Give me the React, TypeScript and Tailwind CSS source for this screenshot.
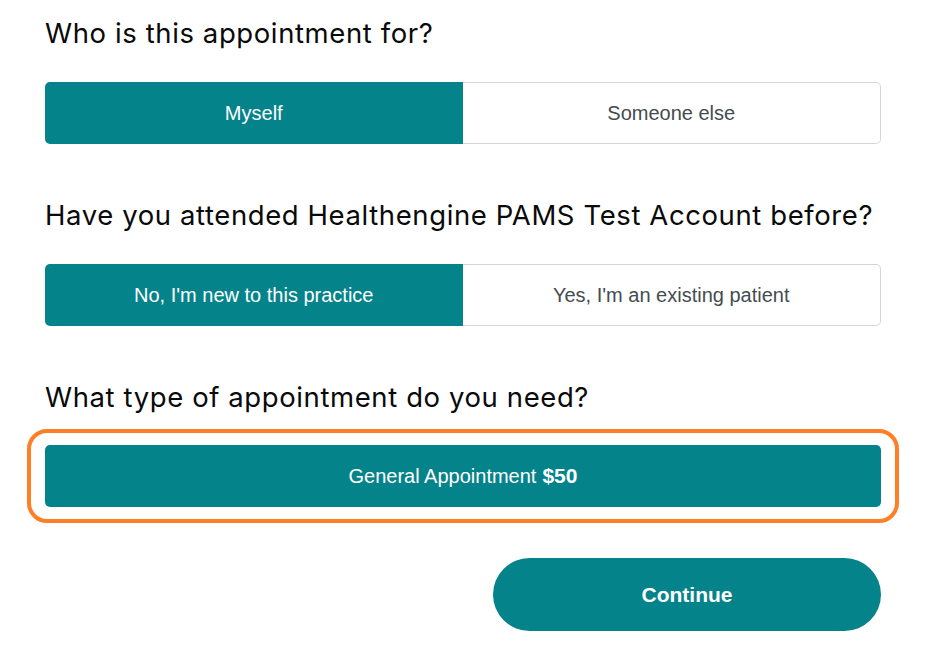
import { useState } from 'react'

function Toggle({ options, value, onChange }: { options: string[]; value: number; onChange: (i: number) => void }) {
  return (
    <div className="flex h-[62px] w-full">
      {options.map((opt, i) => {
        const active = i === value
        const first = i === 0
        return (
          <button
            key={opt}
            onClick={() => onChange(i)}
            className={`flex-1 flex items-center justify-center font-['Liberation_Sans',Arial,sans-serif] text-[20px] ${
              first ? 'rounded-l-[5px]' : 'rounded-r-[5px]'
            } ${active ? 'bg-[#05838a] text-white' : 'bg-white text-[#454c50] border border-[#d3d6d8]'} ${
              !active && !first ? 'border-l-0' : ''
            }`}
          >
            {opt}
          </button>
        )
      })}
    </div>
  )
}

function Heading({ children, className = '' }: { children: React.ReactNode; className?: string }) {
  return (
    <h2 className={`font-['Inter',sans-serif] text-[27.5px] leading-[38px] tracking-[0.6px] text-[#0a0a0a] ${className}`}>
      {children}
    </h2>
  )
}

export default function App() {
  const [who, setWho] = useState(0)
  const [attended, setAttended] = useState(0)

  return (
    <div className="w-[943px] h-[654px] bg-white pl-[45px] pt-[14px] overflow-hidden">
      <div className="w-[836px]">
        <Heading className="mb-[30px]">Who is this appointment for?</Heading>
        <Toggle options={['Myself', 'Someone else']} value={who} onChange={setWho} />

        <Heading className="mt-[52px] mb-[30px]">Have you attended Healthengine PAMS Test Account before?</Heading>
        <Toggle
          options={["No, I'm new to this practice", "Yes, I'm an existing patient"]}
          value={attended}
          onChange={setAttended}
        />

        <Heading className="mt-[52px]">What type of appointment do you need?</Heading>
        <div className="-mx-[18px] mt-[13px] border-[4px] border-[#ff7f27] rounded-[20px] px-[14px] py-[12px]">
          <button className="w-full h-[62px] rounded-[5px] bg-[#05838a] text-white font-['Liberation_Sans',Arial,sans-serif] text-[20px] flex items-center justify-center gap-[6px]">
            General Appointment <span className="font-bold text-[21px]">$50</span>
          </button>
        </div>

        <div className="flex justify-end mt-[35px]">
          <button className="w-[388px] h-[73px] rounded-full bg-[#05838a] text-white font-['Liberation_Sans',Arial,sans-serif] text-[21px] font-bold">
            Continue
          </button>
        </div>
      </div>
    </div>
  )
}
